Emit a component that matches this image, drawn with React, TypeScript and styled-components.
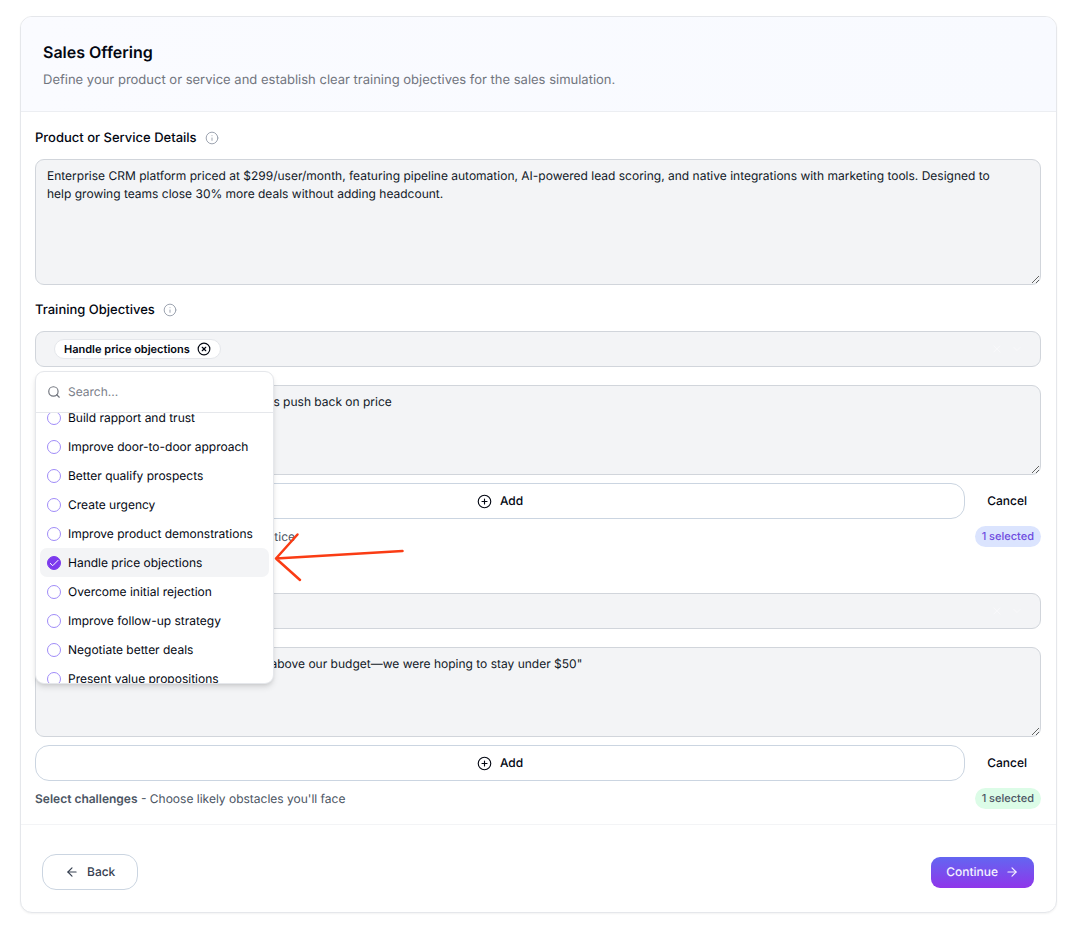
import React, { useLayoutEffect, useRef, useState } from "react";
import styled, { createGlobalStyle } from "styled-components";
import { ArrowLeft, ArrowRight, ChevronDown, CirclePlus, CircleX, Info, Search, X } from "lucide-react";

const GlobalStyle = createGlobalStyle`
  *, *::before, *::after { box-sizing: border-box; }
  body {
    margin: 0;
    background: #ffffff;
    color: #030712;
    font-family: Inter, "Liberation Sans", sans-serif;
    font-size: 12px;
    line-height: 18px;
    text-rendering: geometricPrecision;
  }
  button, input, textarea { font: inherit; color: inherit; text-rendering: inherit; }
  button { cursor: pointer; }
`;

const Page = styled.main`
  padding: 16px 17px 12px 20px;
`;

const Card = styled.section`
  border: 1px solid #e5e7eb;
  border-radius: 12px;
  background: #ffffff;
  box-shadow: 0 1px 2px rgba(0, 0, 0, 0.05);
`;

const CardHeader = styled.header`
  padding: 21px 22px 20px;
  border-bottom: 1px solid #eceef2;
  border-radius: 11px 11px 0 0;
  background: linear-gradient(to right, #fafbff, #f8faff);
`;

const Title = styled.h1`
  margin: 0;
  font-size: 16px;
  line-height: 28px;
  font-weight: 600;
`;

const Description = styled.p`
  margin: 4px 0 0;
  font-size: 13px;
  line-height: 21px;
  color: #71757e;
`;

const Form = styled.div`
  display: flex;
  flex-direction: column;
  gap: 15px;
  padding: 16px 15px 15px 14px;
`;

const Field = styled.div`
  display: flex;
  flex-direction: column;
`;

const LabelRow = styled.div`
  display: flex;
  align-items: center;
  gap: 8px;
  height: 20px;
  margin-bottom: 11px;
  color: #9ca3af;
`;

const Label = styled.label`
  font-size: 13px;
  line-height: 20px;
  font-weight: 500;
  color: #030712;
`;

const TextArea = styled.textarea<{ $tall?: boolean }>`
  display: block;
  width: 100%;
  height: ${(p) => (p.$tall ? 126 : 90)}px;
  padding: 7px 32px 7px 11px;
  border: 1px solid #d1d5db;
  border-radius: 9px;
  background: #f3f4f6;
  color: #111827;
  resize: vertical;
  outline: none;
`;

const SelectWrap = styled.div`
  position: relative;
  margin-bottom: 18px;
`;

const SelectBox = styled.div`
  display: flex;
  align-items: center;
  justify-content: space-between;
  height: 36px;
  padding: 0 17px 0 18px;
  border: 1px solid #d1d5db;
  border-radius: 9px;
  background: #f3f4f6;
`;

const SelectIcons = styled.span`
  display: flex;
  align-items: center;
  gap: 8px;
  margin-left: auto;
  color: #f9fafb;
`;

const Chip = styled.span`
  display: inline-flex;
  align-items: center;
  gap: 7px;
  height: 20px;
  padding: 0 9px;
  border: 1px solid #e5e7eb;
  border-radius: 10px;
  background: #ffffff;
  font-size: 11px;
  line-height: 16px;
  font-weight: 600;
`;

const IconButton = styled.button`
  display: flex;
  padding: 0;
  border: 0;
  background: none;
`;

const Actions = styled.div`
  display: flex;
  gap: 8px;
  margin-top: 8px;
`;

const OutlineButton = styled.button<{ $grow?: boolean }>`
  display: flex;
  align-items: center;
  justify-content: center;
  gap: 8px;
  flex: ${(p) => (p.$grow ? "1" : "none")};
  height: 36px;
  padding: 0 22px;
  border: 1px solid #cbd5e1;
  border-radius: 14px;
  background: #ffffff;
  font-weight: 500;
  color: ${(p) => (p.$grow ? "#030712" : "#374151")};
`;

const GhostButton = styled.button`
  padding: 0 14px;
  border: 0;
  border-radius: 14px;
  background: none;
  font-weight: 500;
`;

const HelpRow = styled.div`
  display: flex;
  align-items: center;
  justify-content: space-between;
  margin-top: 7px;
  color: #4b5563;
`;

const HelpText = styled.p`
  margin: 0;
  strong { font-weight: 600; }
`;

const Pill = styled.span<{ $tone: "blue" | "green" }>`
  height: 21px;
  padding: 0 7px;
  border-radius: 11px;
  font-size: 11px;
  line-height: 21px;
  font-weight: 500;
  background: ${(p) => (p.$tone === "blue" ? "#dbe4fe" : "#dcfce7")};
  color: ${(p) => (p.$tone === "blue" ? "#6d4be0" : "#4b5563")};
`;

const Menu = styled.div`
  position: absolute;
  z-index: 2;
  top: calc(100% + 4px);
  left: 0;
  width: 239px;
  border: 1px solid #e5e7eb;
  border-radius: 9px;
  background: #ffffff;
  box-shadow: 0 4px 6px -1px rgba(0, 0, 0, 0.12), 0 2px 4px -2px rgba(0, 0, 0, 0.12);
`;

const SearchRow = styled.label`
  display: flex;
  align-items: center;
  gap: 7px;
  height: 41px;
  padding: 0 11px;
  border-bottom: 1px solid #e5e7eb;
  color: #71757e;
`;

const SearchInput = styled.input`
  flex: 1;
  min-width: 0;
  padding: 0;
  border: 0;
  outline: none;
  background: none;
  &::placeholder { color: #7b8089; opacity: 1; }
`;

const OptionList = styled.ul`
  height: 270px;
  margin: 0;
  padding: 4px;
  overflow-y: auto;
  scrollbar-width: none;
  list-style: none;
  border-radius: 0 0 8px 8px;
`;

const Option = styled.label<{ $active: boolean }>`
  display: flex;
  align-items: center;
  gap: 7px;
  height: 29px;
  padding: 0 7px;
  border-radius: 7px;
  white-space: nowrap;
  background: ${(p) => (p.$active ? "#f3f4f6" : "transparent")};
`;

const CheckWrap = styled.span`
  display: grid;
  flex: none;
  > * { grid-area: 1 / 1; }
`;

const Check = styled.input`
  appearance: none;
  width: 14px;
  height: 14px;
  margin: 0;
  border: 1px solid #a08cf8;
  border-radius: 50%;
  &:checked { background: #7c3aed; border-color: #7c3aed; }
`;

const Arrow = styled.svg`
  position: absolute;
  top: 159px;
  left: 100%;
  pointer-events: none;
`;

const Footer = styled.footer`
  display: flex;
  align-items: center;
  justify-content: space-between;
  padding: 29px 22px 22px 21px;
  border-top: 1px solid #f3f4f6;
`;

const PrimaryButton = styled.button`
  display: flex;
  align-items: center;
  gap: 7px;
  height: 31px;
  padding: 0 15px;
  border: 0;
  border-radius: 9px;
  background: linear-gradient(to bottom, #6366f1, #8f36ea);
  color: #f5f3ff;
  font-weight: 500;
`;

const OBJECTIVES = [
  "Build rapport and trust",
  "Improve door-to-door approach",
  "Better qualify prospects",
  "Create urgency",
  "Improve product demonstrations",
  "Handle price objections",
  "Overcome initial rejection",
  "Improve follow-up strategy",
  "Negotiate better deals",
  "Present value propositions",
];

function FieldLabel({ id, children }: { id: string; children: React.ReactNode }) {
  return (
    <LabelRow>
      <Label htmlFor={id}>{children}</Label>
      <Info size={14} strokeWidth={1.7} />
    </LabelRow>
  );
}

function ObjectiveMenu() {
  const [chosen, setChosen] = useState<string[]>(["Handle price objections"]);
  const list = useRef<HTMLUListElement>(null);

  useLayoutEffect(() => {
    if (list.current) list.current.scrollTop = 14;
  }, []);

  const toggle = (name: string) =>
    setChosen((now) => (now.includes(name) ? now.filter((n) => n !== name) : [...now, name]));

  return (
    <Menu>
      <SearchRow>
        <Search size={14} strokeWidth={2} />
        <SearchInput placeholder="Search..." aria-label="Search objectives" />
      </SearchRow>
      <OptionList ref={list}>
        {OBJECTIVES.map((name) => (
          <li key={name}>
            <Option $active={chosen.includes(name)}>
              <CheckWrap>
                <Check type="checkbox" checked={chosen.includes(name)} onChange={() => toggle(name)} />
                {chosen.includes(name) && (
                  <svg width="14" height="14" viewBox="0 0 14 14" fill="none" stroke="#ffffff" strokeLinecap="round" strokeLinejoin="round">
                    <path d="M3.3 7.4 5.7 9.7 11 4.4" />
                  </svg>
                )}
              </CheckWrap>
              {name}
            </Option>
          </li>
        ))}
      </OptionList>
      <Arrow width="134" height="54" viewBox="0 0 134 54" fill="none" stroke="#fa3c14" strokeWidth="2.5" strokeLinecap="round" strokeLinejoin="round" aria-hidden="true">
        <path d="M129.5 20 3 27.5M24.5 3.5 3 27.5 27 49" />
      </Arrow>
    </Menu>
  );
}

function FieldActions() {
  return (
    <Actions>
      <OutlineButton type="button" $grow>
        <CirclePlus size={15} strokeWidth={1.8} />
        Add
      </OutlineButton>
      <GhostButton type="button">Cancel</GhostButton>
    </Actions>
  );
}

function BoxIcons() {
  return (
    <SelectIcons>
      <X size={12} strokeWidth={1.5} />
      <ChevronDown size={12} strokeWidth={1.5} />
    </SelectIcons>
  );
}

export default function App() {
  return (
    <>
      <GlobalStyle />
      <Page>
        <Card>
          <CardHeader>
            <Title>Sales Offering</Title>
            <Description>
              Define your product or service and establish clear training objectives for the sales simulation.
            </Description>
          </CardHeader>
          <Form>
            <Field>
              <FieldLabel id="details">Product or Service Details</FieldLabel>
              <TextArea
                id="details"
                $tall
                defaultValue="Enterprise CRM platform priced at $299/user/month, featuring pipeline automation, AI-powered lead scoring, and native integrations with marketing tools. Designed to help growing teams close 30% more deals without adding headcount."
              />
            </Field>
            <Field>
              <FieldLabel id="objectives">Training Objectives</FieldLabel>
              <SelectWrap>
                <SelectBox>
                  <Chip>
                    Handle price objections
                    <IconButton type="button" aria-label="Remove Handle price objections">
                      <CircleX size={14} strokeWidth={2} />
                    </IconButton>
                  </Chip>
                  <BoxIcons />
                </SelectBox>
                <ObjectiveMenu />
              </SelectWrap>
              <TextArea id="objectives" defaultValue="Stay composed when existing customers push back on price" />
              <FieldActions />
              <HelpRow>
                <HelpText>
                  <strong>Select objectives</strong> - Choose tactics to practice
                </HelpText>
                <Pill $tone="blue">1 selected</Pill>
              </HelpRow>
            </Field>
            <Field>
              <FieldLabel id="challenges">Likely Challenges</FieldLabel>
              <SelectWrap>
                <SelectBox>
                  <BoxIcons />
                </SelectBox>
              </SelectWrap>
              <TextArea
                id="challenges"
                defaultValue={'"Your price per user you quoted is well above our budget—we were hoping to stay under $50"'}
              />
              <FieldActions />
              <HelpRow>
                <HelpText>
                  <strong>Select challenges</strong> - Choose likely obstacles you'll face
                </HelpText>
                <Pill $tone="green">1 selected</Pill>
              </HelpRow>
            </Field>
          </Form>
          <Footer>
            <OutlineButton type="button">
              <ArrowLeft size={14} strokeWidth={2} />
              Back
            </OutlineButton>
            <PrimaryButton type="button">
              Continue
              <ArrowRight size={14} strokeWidth={2} />
            </PrimaryButton>
          </Footer>
        </Card>
      </Page>
    </>
  );
}
